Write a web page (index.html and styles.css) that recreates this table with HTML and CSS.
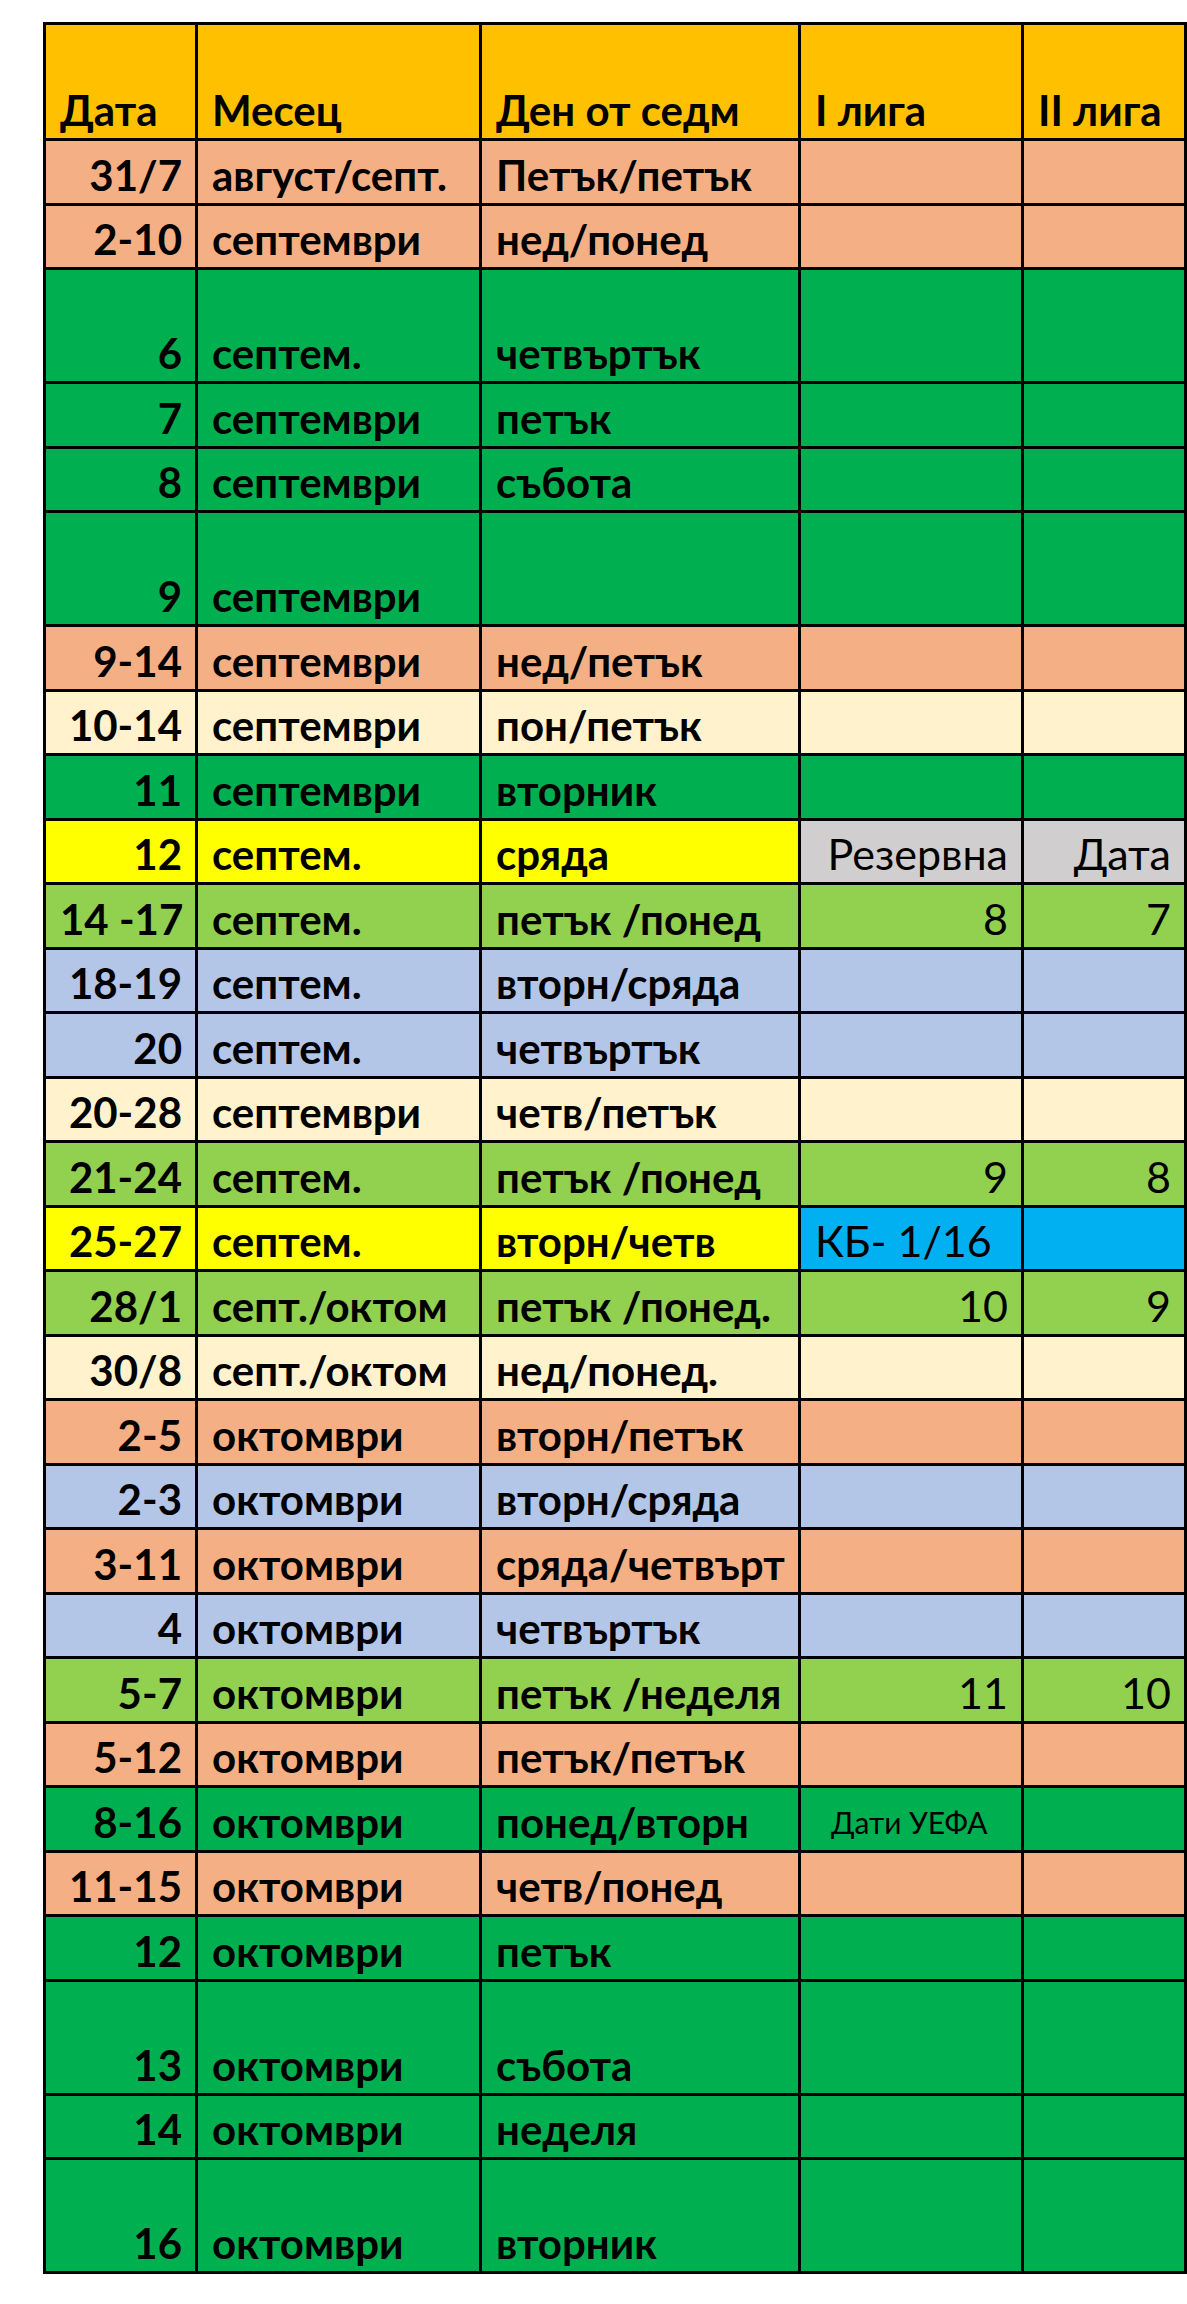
FILE: index.html
```html
<!DOCTYPE html>
<html lang="bg">
<head>
<meta charset="utf-8">
<title>Програма</title>
<link rel="stylesheet" href="styles.css">
</head>
<body>
<table class="sheet">
  <colgroup>
    <col class="c1"><col class="c2"><col class="c3"><col class="c4"><col class="c5">
  </colgroup>
  <tr class="head tall-h">
    <td>Дата</td><td>Месец</td><td>Ден от седм</td><td>I лига</td><td>II лига</td>
  </tr>
  <tr class="salmon"><td class="d">31/7</td><td>август/септ.</td><td>Петък/петък</td><td></td><td></td></tr>
  <tr class="salmon"><td class="d">2-10</td><td>септември</td><td>нед/понед</td><td></td><td></td></tr>
  <tr class="green tall"><td class="d">6</td><td>септем.</td><td>четвъртък</td><td></td><td></td></tr>
  <tr class="green"><td class="d">7</td><td>септември</td><td>петък</td><td></td><td></td></tr>
  <tr class="green"><td class="d">8</td><td>септември</td><td>събота</td><td></td><td></td></tr>
  <tr class="green tall"><td class="d">9</td><td>септември</td><td></td><td></td><td></td></tr>
  <tr class="salmon"><td class="d">9-14</td><td>септември</td><td>нед/петък</td><td></td><td></td></tr>
  <tr class="cream"><td class="d">10-14</td><td>септември</td><td>пон/петък</td><td></td><td></td></tr>
  <tr class="green"><td class="d">11</td><td>септември</td><td>вторник</td><td></td><td></td></tr>
  <tr class="yellow"><td class="d">12</td><td>септем.</td><td>сряда</td><td class="gray n">Резервна</td><td class="gray n">Дата</td></tr>
  <tr class="lgreen"><td class="d">14 -17</td><td>септем.</td><td>петък /понед</td><td class="n">8</td><td class="n">7</td></tr>
  <tr class="lblue"><td class="d">18-19</td><td>септем.</td><td>вторн/сряда</td><td></td><td></td></tr>
  <tr class="lblue"><td class="d">20</td><td>септем.</td><td>четвъртък</td><td></td><td></td></tr>
  <tr class="cream"><td class="d">20-28</td><td>септември</td><td>четв/петък</td><td></td><td></td></tr>
  <tr class="lgreen"><td class="d">21-24</td><td>септем.</td><td>петък /понед</td><td class="n">9</td><td class="n">8</td></tr>
  <tr class="yellow"><td class="d">25-27</td><td>септем.</td><td>вторн/четв</td><td class="blue t">КБ- 1/16</td><td class="blue"></td></tr>
  <tr class="lgreen"><td class="d">28/1</td><td>септ./октом</td><td>петък /понед.</td><td class="n">10</td><td class="n">9</td></tr>
  <tr class="cream"><td class="d">30/8</td><td>септ./октом</td><td>нед/понед.</td><td></td><td></td></tr>
  <tr class="salmon"><td class="d">2-5</td><td>октомври</td><td>вторн/петък</td><td></td><td></td></tr>
  <tr class="lblue"><td class="d">2-3</td><td>октомври</td><td>вторн/сряда</td><td></td><td></td></tr>
  <tr class="salmon"><td class="d">3-11</td><td>октомври</td><td>сряда/четвърт</td><td></td><td></td></tr>
  <tr class="lblue"><td class="d">4</td><td>октомври</td><td>четвъртък</td><td></td><td></td></tr>
  <tr class="lgreen"><td class="d">5-7</td><td>октомври</td><td>петък /неделя</td><td class="n">11</td><td class="n">10</td></tr>
  <tr class="salmon"><td class="d">5-12</td><td>октомври</td><td>петък/петък</td><td></td><td></td></tr>
  <tr class="green"><td class="d">8-16</td><td>октомври</td><td>понед/вторн</td><td class="small">Дати УЕФА</td><td></td></tr>
  <tr class="salmon"><td class="d">11-15</td><td>октомври</td><td>четв/понед</td><td></td><td></td></tr>
  <tr class="green"><td class="d">12</td><td>октомври</td><td>петък</td><td></td><td></td></tr>
  <tr class="green tall"><td class="d">13</td><td>октомври</td><td>събота</td><td></td><td></td></tr>
  <tr class="green"><td class="d">14</td><td>октомври</td><td>неделя</td><td></td><td></td></tr>
  <tr class="green tall"><td class="d">16</td><td>октомври</td><td>вторник</td><td></td><td></td></tr>
</table>
</body>
</html>
```
FILE: styles.css
```css
html, body {
  margin: 0;
  padding: 0;
  background: #ffffff;
}

body {
  padding: 22px 0 0 43px;
}

.sheet {
  border-collapse: collapse;
  table-layout: fixed;
  width: 1144px;
  font-family: Lato, "Open Sans", "Liberation Sans", sans-serif;
  font-weight: 700;
  font-size: 42px;
  color: #000000;
}

.c1 { width: 152px; }
.c2 { width: 284px; }
.c3 { width: 319px; }
.c4 { width: 223px; }
.c5 { width: 163px; }

.sheet td {
  border: 3px solid #000000;
  padding: 0 13px 5px 14px;
  vertical-align: bottom;
  line-height: 46px;
  white-space: nowrap;
  overflow: hidden;
}

.sheet tr { height: 64.5px; }
.sheet tr.tall { height: 114px; }
.sheet tr.tall-h { height: 116px; }

.sheet td.d { text-align: right; }

.head { background: #FFC000; }
.salmon { background: #F4B084; }
.green { background: #00B050; }
.cream { background: #FFF2CC; }
.yellow { background: #FFFF00; }
.lgreen { background: #92D050; }
.lblue { background: #B4C6E7; }

.sheet td.gray { background: #D0CECE; }
.sheet td.blue { background: #00B0F0; }

.sheet td.n {
  text-align: right;
  font-weight: 400;
  font-size: 43px;
}

.sheet td.t {
  text-align: left;
  font-weight: 400;
  font-size: 43px;
}

.sheet td.small {
  font-weight: 400;
  font-size: 30px;
  padding-left: 30px;
}
```
